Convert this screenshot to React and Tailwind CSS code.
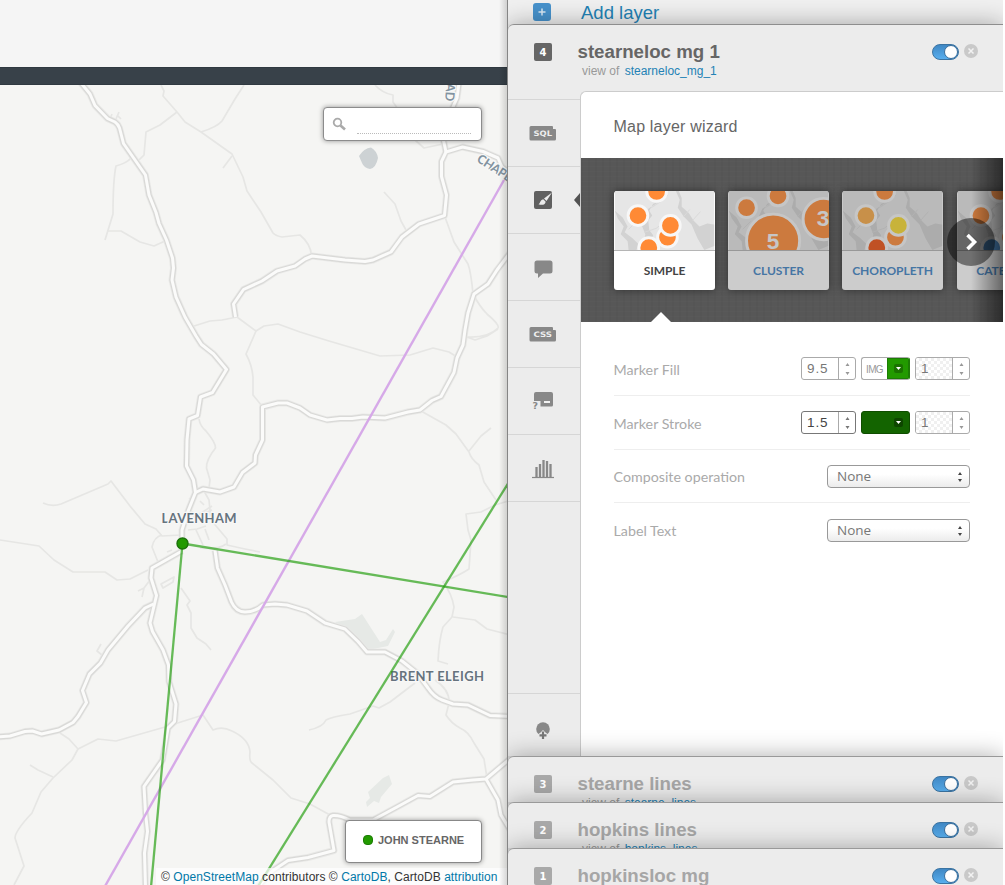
import React from "react";

const majorRoads = [
  "M81 83 L90 94 L95 105.5 L107.5 118.5 L115 122 Q118 124 119.5 128 L123.5 143.5 L145.5 175 L149 195 L156 212.5 L159 223.5 L166.5 240 L172.5 258 L173.5 268 L172 280 L176 297 L185 317 L196 336 L201.5 344.5 L213.5 354 L226.5 369.5 L212.5 392.5 L200.5 397 L197.5 415.5 L189 419 L187 440 L186.5 466 L193.5 480 L195.5 492.5 L188.5 510 L182 530 L182 545",
  "M195.5 492.5 L203 489 L220 492 L234 487 L242.5 472.5 L255 463 L255.5 455 L262.5 440 L262.5 407 L278 403 L287 403 L300 408 L310 415 L327 420 L340 418.5 L352 418.5 L363 417 L385 418 L408 412 L420 410 L432 400.5 L441 396.5 L454 372.5 L457 358 L463 345 L465 330 L468 313 L474 294 L488 284 L497 270 L512 250",
  "M235.5 317 L233.5 304 L243.5 289.5 L262 281 L277 271 L295 266 L305 259 L312 256 L345 260 L365 261.5 L373 260 L391 252 L402 237 L419 224 L444.5 215.5 L446.5 195 L441.5 176.5 L441.5 161.5 L446 152 L462.5 147 L483 151.5 L498 158 L502 167 L512 175",
  "M446 152 L443 138 L453 107 L457 98 L459 83",
  "M182 551 L152 568 L151 578 L156.5 595.5 L150 623 L152.5 631.5 L163 650 L168.5 665 L169 681.5 L176 704 L174.5 721.5 L168 728 L165.5 743 L162.5 760 L144 786.5 L145.5 813 L147.5 831.5 L144.5 853 L145.5 887",
  "M153.5 604 L145 608 L128 626 L108 650 L100.5 663 L89.5 674 L82.5 690.5 L86.5 702.5 L78 716.5 L73 722.5 L59 730 L41.5 734 L32.5 731 L25 731.5 L10 736 L-2 737",
  "M215 550.5 L217.5 568 L225 585 L231.5 602 Q236 612 245 612 Q255 612 263 605 L275 604 L287 605 L307 611 L325 623 L345 629 L358 641.5 L367 652 L385 652 L402 661 L417 673 L428 688 Q434 697 442 700 L453 704 L468 705 L490 715.5 L510 716.5",
  "M512 757 L486 779 L473 780 L453 782 L430 796.5 L418 795.5 L397 807 L373 820 L350 820 Q340 815 333 815.5 Q329 816 329 822 L334 850.5 L308 857.5 L288 860.5 L273 870.5 L255 890",
  "M486 779 L498 800 L501 815 L510 830",
];

const minorRoads = [
  "M161 85 L164 91 L163 96 L177 112 L185 122 L201 132 L232 154 L243 177 L247 191 L261 212 L273 233 Q276 236 282 237 L300 235 Q311 244 311.5 256",
  "M177 112 L160 125 L146 132 L144 155 L139 160",
  "M244 85 L235 99 L222 121 Q217 127 201 132",
  "M232 156 L223 168",
  "M131 158 Q127 163 116 166 Q113 180 113 214 L105 240",
  "M108 231 L121 231 L140 242 L154 246 L165 241",
  "M110 119 L112 114 M116 119 L119 112 M117 115 L121 119",
  "M194 326 L210 321 L222 320 L237 317 L256 331 L246 354 Q252 365 253 377 L253 395 L262 406",
  "M256 331 L264 326 L278 324 L300 332 L329 341 L346 346 L380 356 L410 355 L433 348 L449 352 L457 357",
  "M375 85 Q382 93 393 95 L393 102 L400 112",
  "M415 140 L424 148 L443 144",
  "M384 192 L395 204 L401 221 L406 230",
  "M445 217 L454 242 L468 264 Q471 272 473 294 Q480 307 487 314 Q500 325 498 328 Q488 338 467 337 L475 340 L487 336 L498 329",
  "M421 411 L446 425 L456 434 L469 452 Q471 459 479 465 L484 482 L496 500",
  "M469 451 L481 436 L491 428",
  "M512 500 L495 505 L481 512 L466 514 L468 530 L471 540 L469 569 Q460 575 443 582 Q452 594 454 607 L452 617 L443 627 Q439 640 438 661 L448 664",
  "M453 617 L475 620 L487 629 L510 635",
  "M199 419 Q200 426 206 431 Q216 443 215.5 448 Q206 460 206.5 468 L210 480 L209 488",
  "M43 503 Q52 507 61 504 L108 484 L111 481 L130 506 L145 524 L156 529 L162 536 L181 535",
  "M0 540 L39 546 L54 560 L73 572 L105 572 L117 580 L130 579 L148 570",
  "M158 562 L152 547 Q154 537 162 535",
  "M204 491 L209 500 L211 520 L227 539 L227 545 L245 549 L260 552",
  "M188 510 L198 515 L212 506 M192 518 L212 510 M188 530 L197 529 L206 526 M196 530 L203 545 M205 529 L209 540 M226 544 Q218 550 200 548",
  "M200 501 L204 505 M193 497 L189 499 M167 552 L172 550 M186 520 L188 512",
  "M150 580 L144 588 L138 591 M144 588 L142 597 M161 584 L174 577 L173 582 L163 588 Z",
  "M181 588 L190 601 L187 605 L191 613 L191 628 L197 638 L206 644 L211 650",
  "M101 644 L97 651 L102 655",
  "M60 733 L69 739 L78 749 L98 739 L116 741 L165 727 L203 715 L213 730 Q222 726 232 731 Q249 739 250 752 Q249 761 252 763 L273 780 L291 798 L310 804 L330 815",
  "M78 749 L72 760 L53 778 L41 792 L32 813 Q15 831 15 838 L24 866 L14 885",
  "M30 765 L38 770 L53 777",
  "M309 730 Q323 727 326 720 Q331 717 350 714 L373 706 L379 708 L390 702 L415 683",
  "M435 680 Q450 690 449 703 L446 715 Q451 723 460 728 Q469 732 474 743 L484 759 L487 778",
];

const Badge = ({ n, active }) => (
  <div
    className={`flex h-[18px] w-[18px] items-center justify-center rounded-[2px] font-['DejaVu_Sans',sans-serif] text-[10px] font-bold text-white ${
      active ? "bg-[#666]" : "bg-[#a9a9a9]"
    }`}
  >
    {n}
  </div>
);

const Toggle = () => (
  <div className="flex h-4 w-[27px] justify-end rounded-full border border-[#3b74a3] bg-linear-to-b from-[#4088c4] to-[#58aeee]">
    <div className="h-[14px] w-[14px] rounded-full border border-[#3b6e9b] bg-white" />
  </div>
);

const Close = () => (
  <svg className="h-[14px] w-[14px]" viewBox="0 0 14 14">
    <circle cx="7" cy="7" r="7" fill="#c9c9c9" />
    <path d="M4.5 4.5l5 5M9.5 4.5l-5 5" stroke="#f2f2f2" strokeWidth="1.5" />
  </svg>
);

const LayerHeader = ({ n, title, table, active }) => (
  <div className="flex h-[66px] shrink-0 pl-[26px]">
    <div className="w-[43.500px] pt-[18px]">
      <Badge n={n} active={active} />
    </div>
    <div className="flex-1 whitespace-nowrap pt-[15px]">
      <div className={`text-[18.700px] font-bold leading-[23px] ${active ? "text-[#666]" : "text-[#a6a6a6]"}`}>{title}</div>
      <div className="pl-[4.500px] text-[12px] leading-4 text-[#999]">
        view of <span className="pl-[2px] text-[#2382b5]">{table}</span>
      </div>
    </div>
    <div className="flex h-fit gap-[5px] pr-[25px] pt-[19px]">
      <Toggle />
      <Close />
    </div>
  </div>
);

const Collapsed = ({ last, ...props }) => (
  <section
    className={`relative shrink-0 overflow-visible rounded-tl-[6px] border-t border-[#999] bg-[#ececec] shadow-[0_0_25px_rgba(0,0,0,0.32)] ${
      last ? "h-[37px]" : "h-[46px]"
    }`}
  >
    <div className="h-full overflow-hidden">
      <LayerHeader {...props} />
    </div>
  </section>
);

const CodeIcon = ({ label }) => (
  <svg width="28" height="16" viewBox="0 0 28 16" fill="#888">
    <path d="M2 1h21a1 1 0 0 1 1 1v2h2a1 1 0 0 1 1 1v9a1.500 1.500 0 0 1-1.500 1.500H2A1.500 1.500 0 0 1 .5 14V2.500A1.500 1.500 0 0 1 2 1z" />
    <text x="4.500" y="11" fill="#eee" fontFamily="DejaVu Sans" fontWeight="bold" fontSize="7.500" textLength="18.500" lengthAdjust="spacingAndGlyphs">
      {label}
    </text>
  </svg>
);

const BrushIcon = () => (
  <svg width="18" height="18" viewBox="0 0 18 18">
    <rect width="18" height="18" rx="2" fill="#606060" />
    <path d="M18 1.500 L10 7.500 L12.500 10 Z" fill="#ececec" />
    <path d="M9.200 8.200 L11.700 10.700 C11 14 8 14.500 4.500 13.200 C6.500 12.500 5.800 9 9.200 8.200Z" fill="#ececec" />
  </svg>
);

const BubbleIcon = () => (
  <svg className="mt-[3px]" width="19" height="18" viewBox="0 0 19 18">
    <path d="M3 .5h13a2.500 2.500 0 0 1 2.500 2.500v8a2.500 2.500 0 0 1-2.500 2.500H9L4 18v-4.500H3A2.500 2.500 0 0 1 .5 11V3A2.500 2.500 0 0 1 3 .5z" fill="#888" />
  </svg>
);

const LegendIcon = () => (
  <svg className="mb-[2px]" width="22" height="18" viewBox="0 0 22 18">
    <path d="M4 1h15a2 2 0 0 1 2 2v11a1.500 1.500 0 0 1-1.500 1.500H8.500V10H2V3a2 2 0 0 1 2-2z" fill="#888" />
    <rect x="12" y="10" width="6" height="2" fill="#f2f2f2" />
    <text x="0.500" y="17.500" fontSize="9.500" fontWeight="bold" fill="#888" fontFamily="DejaVu Sans">?</text>
  </svg>
);

const BarsIcon = () => (
  <svg className="mt-[2px]" width="22" height="20" viewBox="0 0 22 20" stroke="#888" strokeWidth="2.300" fill="none">
    <path d="M4.500 18V8M8 18V5M11.500 18V1M15 18V2M18.500 18V5" />
    <path d="M0 18.500h22" strokeWidth="1.200" />
  </svg>
);

const AddPinIcon = () => (
  <svg width="14" height="18" viewBox="0 0 14 18">
    <circle cx="7" cy="7" r="6.800" fill="#888" />
    <path d="M2.500 12L4.500 10.500l2.500-2.500 2.500 2.500L11.500 12v6h-9z" fill="#ececec" />
    <path d="M7 9.500v7.500M3.500 13.300h7" stroke="#777" strokeWidth="2.200" />
  </svg>
);

const Map = () => (
  <svg className="block h-full w-full" viewBox="0 85 507 800" fill="none" strokeLinejoin="round">
    <rect y="85" width="507" height="800" fill="#f5f5f3" />
    <g fill="#e6e9e6">
      <path d="M335 622 L355 619 L362 614 L380 642 L386 640 L393 629 L395 632 L388 646 L368 650 L352 632 Z" />
      <path d="M368 792 L383 778 L389 775 L392 784 L381 797 L379 803 L374 801 L367 807 L366 802 L370 798 Z" />
    </g>
    <path d="M359 156 Q364 148 371 147.500 Q377 151 378 158 Q376 168 370 169 Q364 168 362 163 Z" fill="#cdd2d4" />
    <g stroke="#e6e6e4" strokeWidth="1.700">
      {minorRoads.map((d, i) => <path key={i} d={d} />)}
    </g>
    <g stroke="#e9e9e7" strokeWidth="7">
      {majorRoads.map((d, i) => <path key={i} d={d} />)}
    </g>
    <g stroke="#d9d9d7" strokeWidth="5.400">
      {majorRoads.map((d, i) => <path key={i} d={d} />)}
    </g>
    <g stroke="#fbfbfa" strokeWidth="3">
      {majorRoads.map((d, i) => <path key={i} d={d} />)}
    </g>
    <g fontFamily="Lato, 'Open Sans', sans-serif" fontWeight="bold" fill="#66737e" stroke="#f8f8f7" strokeWidth="2.500" style={{ paintOrder: "stroke" }}>
      <text x="161.500" y="522.500" fontSize="13" textLength="75">LAVENHAM</text>
      <text x="390" y="681" fontSize="13" textLength="94">BRENT ELEIGH</text>
      <g fontSize="12.500" fill="#8293a0">
        <text transform="translate(476 161) rotate(33)" textLength="45">CHAPEL</text>
        <text transform="translate(447.500 66) rotate(94)" textLength="35">ROAD</text>
      </g>
    </g>
    <path d="M504 180 L104 888" stroke="#d6a9e8" strokeWidth="2.400" />
    <g stroke="#1f9d0b" strokeOpacity="0.670" strokeWidth="2.300">
      <path d="M182.500 543.500 L508 597" />
      <path d="M182.500 543.500 L151 887" />
      <path d="M508 483.500 L257 888" />
    </g>
    <circle cx="182.500" cy="543.500" r="5.500" fill="#229a00" stroke="#1c720a" strokeWidth="1.400" />
  </svg>
);

const Terrain = () => (
  <>
    <rect width="101" height="60" fill="#e6e6e6" />
    <path d="M62 0 L66 9 L64 17 L70 26 L78 34 L84 48 L91 60 L101 56 L101 34 L94 33 L86 36 L80 30 L75 22 L68 16 L68 7 L65 0Z M45 11 L39 13 L35 20 L38 25 L34 30 L35 40 L39 45 L32 60 L28 60 L31 44 L27 34 L34 18Z M0 20 L8 27 L13 36 L10 42 L18 48 L24 54 L22 60 L14 60 L13 51 L6 44 L9 36 L3 28Z" fill="#d2d2d2" />
    <path d="M70 26 L76 19 M79 30 L87 21 M37 17 L48 10 L54 4 M14 39 L22 31 M30 42 L42 38 L51 31" stroke="#d9d9d9" fill="none" />
  </>
);

const Dot = ({ x, y, r = 8.5, c = "#ff8a35" }) => (
  <circle cx={x} cy={y} r={r + 1.5} fill={c} stroke="#f7f7f7" strokeWidth="3" />
);

const ThumbCard = ({ title, active, children }) => (
  <div className="h-[99px] w-[101px] shrink-0 rounded-[3px] bg-[#555] shadow-[0_0_8px_rgba(0,0,0,0.45)]">
    <div className={`flex h-full flex-col overflow-hidden rounded-[3px] bg-white ${active ? "" : "opacity-70"}`}>
      <svg className="block h-[60px] w-[101px] border-b border-[#b5b5b5]" viewBox="0 0 101 60">
        <Terrain />
        {children}
      </svg>
      <div className={`flex flex-1 items-center justify-center font-[Lato] text-[12px] font-bold tracking-[-.05px] ${active ? "text-[#444]" : "text-[#3f84c6]"}`}>
        {title}
      </div>
    </div>
  </div>
);

const checker =
  "bg-[repeating-conic-gradient(#f0f0f0_0_25%,#ffffff_0_50%)] bg-[length:6px_6px]";

const Stepper = ({ value, dark, checkered }) => (
  <div className={`flex h-[23px] w-[55px] overflow-hidden rounded-[3px] border bg-white ${dark ? "border-[#777]" : "border-[#aaa]"}`}>
    <div className={`flex flex-1 items-center pl-[5px] pt-px text-[13.500px] tracking-[.9px] ${dark ? "text-[#444]" : "text-[#777]"} ${checkered ? checker : ""}`}>
      {value}
    </div>
    <div className="flex w-[17px] items-center justify-center border-l border-[#aaa]">
      <svg width="5" height="12" viewBox="0 0 5 12" fill={dark ? "#777" : "#999"}>
        <path d="M.5 3L2.500 0l2 3zM.5 9l2 3 2-3z" />
      </svg>
    </div>
  </div>
);

const Caret = ({ className }) => (
  <div className={`flex h-[9px] w-[9px] items-center justify-center rounded-[2px] ${className}`}>
    <svg width="5" height="3" viewBox="0 0 5 3" fill="#fff"><path d="M0 0h5L2.500 3z" /></svg>
  </div>
);

const Select = () => (
  <div className="mt-px flex h-[23px] w-[143px] items-center justify-between rounded-[4px] border border-[#999] bg-linear-to-b from-white from-40% to-[#ececec] pl-[9px] pr-[7px] font-['Open_Sans'] text-[13.500px] text-[#777]">
    <span>None</span>
    <svg width="4" height="10" viewBox="0 0 4 10" fill="#444"><path d="M0 3l2-3 2 3zM0 7l2 3 2-3z" /></svg>
  </div>
);

const Row = ({ label, last, short, children }) => (
  <div className={`flex items-center justify-between font-[Lato] ${short ? "h-[53px]" : "h-[54px]"} ${last ? "" : "border-b border-[#eee]"}`}>
    <span className="pt-[2px] text-[14.250px] text-[#aaa]">{label}</span>
    <div className="flex gap-[5px] font-['Liberation_Sans']">{children}</div>
  </div>
);

const SideItem = ({ children }) => (
  <div className="flex h-[67px] w-full shrink-0 items-center justify-center border-b border-[#d6d6d6] pr-[2px]">{children}</div>
);

export default function App() {
  return (
    <div className="flex h-[885px] w-[1005px] overflow-hidden bg-white font-['Liberation_Sans',Arial,sans-serif]">
      <main className="relative flex w-[507px] shrink-0 flex-col">
        <div className="h-[67px] bg-[#f5f5f5]" />
        <div className="h-[18px] border-y border-[#303941] bg-[#384149]" />
        <div className="relative min-h-0 flex-1">
          <Map />
          <div className="absolute left-[323px] top-[22px] flex h-[34px] w-[159px] items-center rounded-[4px] border border-[#8c8c8c] bg-white pl-2 shadow-[0_0_5px_rgba(0,0,0,0.4)]">
            <svg width="15" height="15" viewBox="0 0 15 15" fill="none" stroke="#aaa">
              <circle cx="5.500" cy="5.500" r="3.800" strokeWidth="1.800" />
              <path d="M8.500 8.500l4.500 4" strokeWidth="2.600" />
            </svg>
            <div className="ml-[10px] h-[20px] w-[114px] border-b border-dotted border-[#bbb]" />
          </div>
          <div className="absolute left-[345px] top-[735px] flex h-[43px] w-[137px] items-center gap-[5px] rounded-[4px] border border-[#888] bg-white pb-[3px] pl-[17px] text-[11px] font-bold text-[#666] shadow-[0_0_5px_rgba(0,0,0,0.4)]">
            <div className="h-[10px] w-[10px] shrink-0 rounded-[4px] border border-[#1c7d05] bg-[#229a00]" />
            <span className="whitespace-nowrap">JOHN STEARNE</span>
          </div>
          <div className="absolute bottom-0 right-0 h-[17px] w-[351px] whitespace-nowrap bg-white/70 pl-[5px] text-[12px] leading-[18px] tracking-[.055px] text-[#333]">
            © <span className="text-[#0078a8]">OpenStreetMap</span> contributors © <span className="text-[#0078a8]">CartoDB</span>, CartoDB <span className="text-[#0078a8]">attribution</span>
          </div>
        </div>
        <div className="absolute inset-y-0 right-0 w-[8px] bg-linear-to-r from-transparent to-black/15" />
      </main>

      <aside className="flex w-[496px] shrink-0 flex-col overflow-hidden border-l border-[#858585] bg-[#ececec]">
        <div className="flex h-[24px] shrink-0 bg-[#f0f0f0] pl-[25px]">
          <div className="mt-[3px] flex h-[18px] w-[18px] items-center justify-center rounded-[3px] bg-[#4792cc]">
            <svg width="8" height="8" viewBox="0 0 8 8"><path d="M4 .5v7M.5 4h7" stroke="#d9e9f5" strokeWidth="1.500" /></svg>
          </div>
          <span className="ml-[30px] mt-px text-[18.500px] leading-[23px] text-[#2382b5]">Add layer</span>
        </div>

        <section className="relative flex h-[732px] shrink-0 flex-col rounded-tl-[6px] border-t border-[#8e8e8e] bg-[#ececec] shadow-[0_0_25px_rgba(0,0,0,0.32)]">
          <LayerHeader n="4" title="stearneloc mg 1" table="stearneloc_mg_1" active />
          <div className="flex min-h-0 flex-1">
            <nav className="flex w-[72px] shrink-0 flex-col">
              <div className="h-[9px] border-b border-[#d6d6d6]" />
              <SideItem><CodeIcon label="SQL" /></SideItem>
              <div className="relative">
                <SideItem><BrushIcon /></SideItem>
                <svg className="absolute right-0 top-[26px]" width="6" height="14" viewBox="0 0 6 14"><path d="M6 0v14L0 7z" fill="#525252" /></svg>
              </div>
              <SideItem><BubbleIcon /></SideItem>
              <SideItem><CodeIcon label="CSS" /></SideItem>
              <SideItem><LegendIcon /></SideItem>
              <SideItem><BarsIcon /></SideItem>
              <div className="flex-1" />
              <div className="flex h-[63px] justify-center border-t border-[#d6d6d6] pr-[3px] pt-[28px]"><AddPinIcon /></div>
            </nav>
            <div className="flex min-w-0 flex-1 flex-col overflow-hidden rounded-tl-[6px] border-l border-t border-[#ccc] bg-white">
              <div className="flex h-[66px] shrink-0 items-center pl-[32.500px] pt-[3px] text-[16px] tracking-[.2px] text-[#666]">Map layer wizard</div>
              <div className="relative flex h-[164px] shrink-0 gap-[13px] overflow-hidden bg-[#575757] bg-[repeating-linear-gradient(0deg,rgba(255,255,255,0.012)_0_1px,transparent_1px_5px),repeating-linear-gradient(90deg,rgba(0,0,0,0.025)_0_2px,transparent_2px_7px)] pl-[33px] pt-[33px]">
                <ThumbCard title="SIMPLE" active>
                  <Dot x={42.500} y={0.500} /><Dot x={53.500} y={47} /><Dot x={56.500} y={35} /><Dot x={23.500} y={25} /><Dot x={34.500} y={57.500} />
                </ThumbCard>
                <ThumbCard title="CLUSTER">
                  <Dot x={50} y={5} /><Dot x={18} y={17} />
                  <Dot x={45} y={50.500} r={25.500} /><Dot x={96.500} y={28.500} r={19.500} />
                  <g fill="#f7f7f7" fontSize="23" fontWeight="bold" fontFamily="Liberation Sans">
                    <text x="38.500" y="58.500">5</text><text x="89.500" y="35.500">3</text>
                  </g>
                </ThumbCard>
                <ThumbCard title="CHOROPLETH">
                  <Dot x={42.500} y={0.500} /><Dot x={53.500} y={47} /><Dot x={56.500} y={35} c="#f9dc30" /><Dot x={23.500} y={25} c="#f9aa45" /><Dot x={34.500} y={57.500} c="#ee5010" />
                </ThumbCard>
                <div className="pl-px">
                  <ThumbCard title="CATEGORY">
                    <Dot x={42.500} y={0.500} /><Dot x={53.500} y={47} /><Dot x={23.500} y={25} /><Dot x={34.500} y={57.500} c="#397ec0" />
                  </ThumbCard>
                </div>
                <div className="absolute inset-y-0 right-0 w-[32px] bg-linear-to-r from-transparent to-black/50" />
                <div className="absolute left-[366px] top-[60px] flex h-[48px] w-[48px] items-center justify-center rounded-full bg-black/45">
                  <svg width="13" height="18" viewBox="0 0 13 18"><path d="M2.500 2l7 7-7 7" fill="none" stroke="#fff" strokeWidth="3.600" /></svg>
                </div>
                <svg className="absolute bottom-0 left-[70px]" width="20" height="10" viewBox="0 0 20 10"><path d="M0 10L10 0l10 10z" fill="#fff" /></svg>
              </div>
              <div className="pl-[32.500px] pr-[33px] pt-[20px]">
                <Row label="Marker Fill">
                  <Stepper value="9.5" />
                  <div className="flex h-[23px] w-[49px] overflow-hidden rounded-[3px] border border-[#aaa] border-r-[#1c7d05] bg-white">
                    <div className="flex w-[25px] items-center justify-center pt-px text-[10px] tracking-[-.6px] text-[#999]">IMG</div>
                    <div className="flex flex-1 items-center justify-center border border-[#1c7d05] bg-[#229a00]"><Caret className="bg-[#1a7300]" /></div>
                  </div>
                  <Stepper value="1" checkered />
                </Row>
                <Row label="Marker Stroke">
                  <Stepper value="1.5" dark />
                  <div className="flex h-[23px] w-[49px] items-center justify-end rounded-[3px] border border-[#0f4d00] bg-[#136400] pr-[6px]"><Caret className="bg-[#0d4500]" /></div>
                  <Stepper value="1" checkered />
                </Row>
                <Row label="Composite operation" short><Select /></Row>
                <Row label="Label Text" last><Select /></Row>
              </div>
            </div>
          </div>
        </section>

        <Collapsed n="3" title="stearne lines" table="stearne_lines" />
        <Collapsed n="2" title="hopkins lines" table="hopkins_lines" />
        <Collapsed n="1" title="hopkinsloc mg" table="hopkinsloc_mg" last />
      </aside>
    </div>
  );
}
